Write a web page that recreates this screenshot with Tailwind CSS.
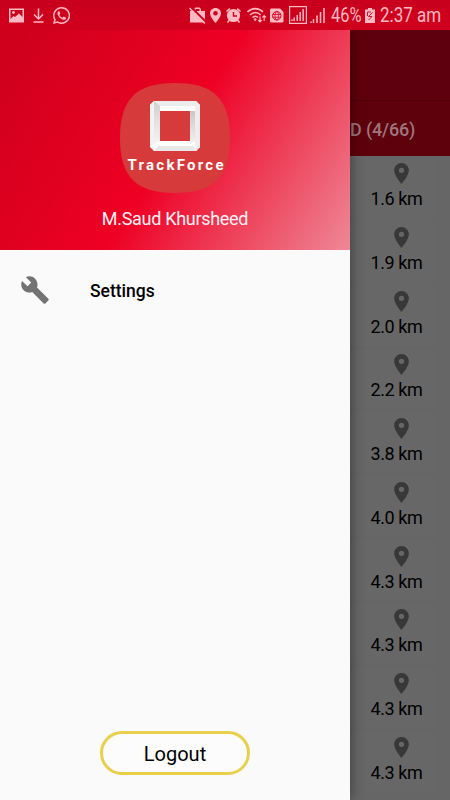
<!DOCTYPE html>
<html lang="en">
<head>
    <meta charset="UTF-8">
    <meta name="viewport" content="width=device-width, initial-scale=1.0">
    <title>TrackForce</title>
    <script src="https://cdn.jsdelivr.net/npm/@tailwindcss/browser@4"></script>
</head>
<body class="w-[450px] h-[800px] overflow-hidden bg-[#666] font-[Roboto,sans-serif]">

    <!-- Status bar -->
    <header class="h-[30px] flex items-center bg-linear-to-b from-[#c8001d] to-[#d0001c] text-[#ffb9c3] pl-[9px]">
        <svg class="w-[15px] h-[15px]" viewBox="0 0 15 15" fill="currentColor">
            <path fill-rule="evenodd" d="M0 0.5H15V14.5H0ZM1.5 2V11L4.5 8L6 9L10 5.5L13.5 9V2Z"/>
            <circle cx="4.5" cy="4.5" r="1.4"/>
        </svg>
        <svg class="w-[11px] h-[15px] ml-[9px]" viewBox="0 0 11 15" fill="none" stroke="currentColor" stroke-width="1.5">
            <path d="M5.5 0.5V11M1 6.5L5.5 11L10 6.5M0.5 14H10.5"/>
        </svg>
        <svg class="w-[17px] h-[17px] ml-[9px]" viewBox="0 0 24 24" fill="currentColor">
            <path fill-rule="evenodd" d="M12 0A12 12 0 0 0 1.7 18L0 24L6.2 22.4A12 12 0 1 0 12 0ZM12 2.1A9.9 9.9 0 1 1 6.6 20.2L3 21.1L4 17.7A9.9 9.9 0 0 1 12 2.1Z"/>
            <path d="M8.5 6C8 6 7 6.7 6.5 7.8C5.5 10.5 8 14 11 16.3C14 18.5 16.3 18.5 17.6 17.3C18.5 16.4 18.5 15.2 18.3 15L15.3 13.5C14.5 13.4 14 15.3 13.2 15.1C11.4 14.4 9.9 13 9 11.2C8.8 10.5 10.2 9.8 10.1 9L9 6.3C8.9 6.1 8.7 6 8.5 6Z"/>
        </svg>

        <svg class="w-[17px] h-[17px] ml-[119px]" viewBox="0 0 17 17">
            <path fill="currentColor" fill-rule="evenodd" d="M1 4H5V2L6.5 0.5H10.5L12 2V4H16V15.5H1ZM6.5 2V4H10.5V2Z"/>
            <path stroke="#cb001d" stroke-width="2" d="M2 0L17 15"/>
            <path stroke="currentColor" stroke-width="1.4" d="M0.5 1L16 16.5"/>
        </svg>
        <svg class="w-[11px] h-[15px] ml-[4px]" viewBox="5 2 14 20" preserveAspectRatio="none" fill="currentColor">
            <path d="M12 2C8.1 2 5 5.1 5 9c0 5.2 7 13 7 13s7-7.8 7-13c0-3.9-3.1-7-7-7zm0 10a3 3 0 1 1 0-6 3 3 0 0 1 0 6z"/>
        </svg>
        <svg class="w-[15px] h-[15px] ml-[5px]" viewBox="0 0 15 15" fill="none" stroke="currentColor">
            <circle cx="7.5" cy="7.5" r="6.6" fill="currentColor" stroke="none"/>
            <path stroke-width="1.6" d="M0.5 3.5L3.8 0.7M14.5 3.5L11.2 0.7M3.5 12L1.5 14.5M11.5 12L13.5 14.5"/>
            <path stroke="#cb001d" stroke-width="1.4" d="M7.5 4V8H11"/>
        </svg>
        <svg class="w-[20px] h-[16px] ml-[6px]" viewBox="0 0 20 16" fill="none" stroke="currentColor" stroke-width="1.6">
            <path d="M0.5 5C5 0.5 11.5 0.5 16 5M3 8C6.3 4.8 10.5 4.8 13.7 8M5.5 10.7C7.3 9 9.5 9 11 10.5"/>
            <circle cx="8.2" cy="12.5" r="1" fill="currentColor" stroke-width="0.8"/>
            <path stroke-width="1.2" d="M13 9.5V15M11.2 13.2L13 15L14.8 13.2M17.2 14V8.5M15.4 10.3L17.2 8.5L19 10.3"/>
        </svg>
        <svg class="w-[14px] h-[15px] ml-[3px]" viewBox="0 0 14 15" fill="none" stroke="#cb001d">
            <path fill="currentColor" stroke="none" d="M1 0.5H10L13.5 4V13.5L12.5 14.5H1L0 13.5V1.5Z"/>
            <circle cx="6.8" cy="7.8" r="4.2"/>
            <ellipse cx="6.8" cy="7.8" rx="1.8" ry="4.2" stroke-width="0.8"/>
            <path stroke-width="0.8" d="M2.6 6.5H11M2.6 9.2H11"/>
        </svg>
        <svg class="w-[18px] h-[18px] ml-[5px]" viewBox="0 0 18 18" fill="none" stroke="currentColor">
            <rect x="0.6" y="0.6" width="16.8" height="16.8" stroke-width="1.2"/>
            <path stroke-width="1.5" d="M14.2 3V15M11.2 6V15M8.2 9V15M5.2 11.5V15M3 13.500V15"/>
        </svg>
        <svg class="w-[15px] h-[15px] ml-[3px]" viewBox="0 0 15 15" fill="none" stroke="currentColor" stroke-width="1.5">
            <path d="M14 0V15M10.5 4V15M7 7.5V15M3.5 11V15M1 13.5V15"/>
        </svg>
        <div class="w-[30px] ml-[6px] text-[20px] leading-6"><span class="inline-block origin-left scale-x-[0.82]">46%</span></div>
        <svg class="w-[10px] h-[15px] ml-[4px] shrink-0" viewBox="0 0 10 15">
            <path fill="currentColor" d="M3 0H7V1.5H10V15H0V1.5H3Z"/>
            <path fill="none" stroke="#cb001d" stroke-width="0.9" d="M2.5 8V4H6M7.5 4.5L3.5 8.5H7L3.5 12"/>
        </svg>
        <div class="ml-[5px] w-[60px] text-[20px] leading-6 whitespace-nowrap"><span class="inline-block origin-left scale-x-[0.85]">2:37 am</span></div>
    </header>

    <div class="flex h-[770px]">
        <!-- Navigation drawer -->
        <aside class="w-[350px] shrink-0 flex flex-col bg-[#fafafa] z-10 shadow-[0_0_14px_rgba(0,0,0,0.45)] [clip-path:inset(0_-20px_0_0)]">
            <div class="h-[220px] flex flex-col items-center pt-[53px] bg-[linear-gradient(122.15deg,#cc001b_0%,#ee0024_50%,#ee8896_100%)]">
                <svg class="w-[110px] h-[110px]" viewBox="0 0 110 110">
                    <defs>
                        <linearGradient id="left" x1="0" y1="0" x2="0" y2="1">
                            <stop offset="0" stop-color="#cfcfcf"/>
                            <stop offset="1" stop-color="#f6f6f6"/>
                        </linearGradient>
                        <linearGradient id="right" x1="0" y1="0" x2="0" y2="1">
                            <stop offset="0" stop-color="#c8c8c8"/>
                            <stop offset="1" stop-color="#f2f2f2"/>
                        </linearGradient>
                    </defs>
                    <path fill="#d63a3a" d="M55 0C94 0 110 16 110 55S94 110 55 110S0 94 0 55S16 0 55 0Z"/>
                    <path fill="#fff" fill-rule="evenodd" d="M34 18H76L80 22V64L76 68H34L30 64V22ZM40 28V58H70V28Z"/>
                    <!-- shaded faces of the frame -->
                    <path fill="#ececec" d="M34 18H76L80 22L76 23H35Z"/>
                    <path fill="#f2f2f2" d="M30 22L34 18L35 23V60L30 64Z"/>
                    <path fill="url(#left)" d="M34 18L40 23V58L34 62Z"/>
                    <path fill="url(#right)" d="M70 28H75V58L70 61Z"/>
                    <path fill="#ededed" d="M75 23L80 22V64L76 68L75 60Z"/>
                    <path fill="#e8e8e8" d="M38 63H73L76 68H34Z"/>
                    <text x="7.5" y="86.5" fill="#fff" font-size="15" font-weight="700" textLength="96">TrackForce</text>
                </svg>
                <p class="mt-[14px] text-[18px] tracking-[-0.3px] leading-6 text-[#fff0f4] whitespace-nowrap">M.Saud Khursheed</p>
            </div>

            <a class="h-20 flex items-center pl-5">
                <svg class="w-[30px] h-[30px]" viewBox="0 0 24 24" fill="#737373">
                    <path d="M22.7 19l-9.1-9.1c.9-2.3.4-5-1.5-6.9-2-2-5-2.4-7.4-1.3L9 6 6 9 1.6 4.7C.4 7.1.9 10.1 2.9 12.1c1.9 1.9 4.6 2.4 6.9 1.5l9.1 9.1c.4.4 1 .4 1.4 0l2.3-2.3c.5-.4.5-1.1.1-1.4z"/>
                </svg>
                <span class="ml-10 pt-[1px] text-[17.5px] leading-6 font-medium text-black">Settings</span>
            </a>

            <button class="mt-auto mb-[25px] mx-auto w-[150px] h-11 pt-[2px] rounded-full border-3 border-[#e8d04a] bg-[#fcfcfc] text-[20px] leading-6 text-black">Logout</button>
        </aside>

        <!-- List behind the drawer -->
        <main class="w-[100px]">
            <div class="h-[71px] bg-[#5e000d] border-b border-[#50000a]"></div>
            <div class="h-[55px] flex items-center bg-[#5f000d] pt-[1px] text-[18px] tracking-[-0.15px] font-medium text-[#9d777b] whitespace-nowrap">D (4/66)</div>
            <ul id="distances"></ul>
        </main>
    </div>

    <script>
        const distances = ['1.6', '1.9', '2.0', '2.2', '3.8', '4.0', '4.3', '4.3', '4.3', '4.3'];

        document.getElementById('distances').innerHTML = distances.map(km => `
            <li class="h-[63.75px] pt-[3px] pr-[14px]">
                <div class="h-[58px] pt-[4px] pl-[7px] rounded-xs bg-[#676767] flex flex-col items-center">
                    <svg class="w-[15px] h-[21px] ml-[9px]" viewBox="5 2 14 20" fill="#383838">
                        <path d="M12 2C8.13 2 5 5.13 5 9c0 5.25 7 13 7 13s7-7.75 7-13c0-3.87-3.13-7-7-7zm0 9.5a2.5 2.5 0 1 1 0-5 2.5 2.5 0 0 1 0 5z"/>
                    </svg>
                    <span class="mt-[3px] text-[18px] tracking-[-0.4px] leading-6 text-black whitespace-nowrap">${km} km</span>
                </div>
            </li>
        `).join('');
    </script>
</body>
</html>
